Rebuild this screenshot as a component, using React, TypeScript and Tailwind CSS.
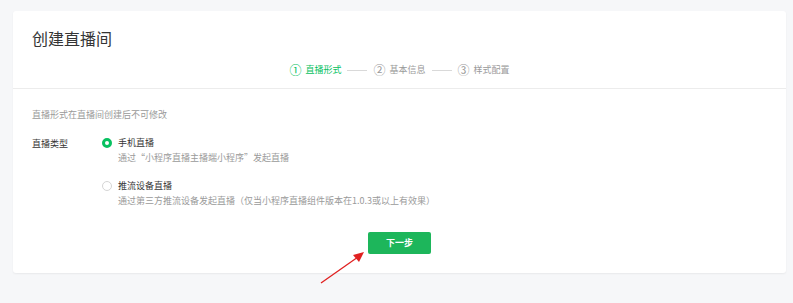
import React, { useState } from 'react';

const steps = ['直播形式', '基本信息', '样式配置'];
const circled = ['①', '②', '③'];

const types = [
  { key: 'phone', label: '手机直播', desc: '通过“小程序直播主播端小程序”发起直播' },
  { key: 'push', label: '推流设备直播', desc: '通过第三方推流设备发起直播（仅当小程序直播组件版本在1.0.3或以上有效果）' },
];

function App() {
  const [type, setType] = useState('phone');

  return (
    <div
      className="relative min-h-screen bg-[#f6f7f9] pt-[11px] pl-[13px] pr-[7px]"
      style={{ fontFamily: '"Noto Sans CJK SC", "Liberation Sans", sans-serif' }}
    >
      <div className="bg-white rounded-[3px] shadow-[0_1px_2px_rgba(0,0,0,0.06)] h-[262px]">
        <div className="h-[78px] border-b border-[#ececec] px-[19px] pt-[14px] relative">
          <h1 className="text-[16px] leading-[26px] text-[#353535] font-normal">创建直播间</h1>
          <div className="flex items-center justify-center gap-[6px] text-[9px] mt-[10px]">
            {steps.map((s, i) => (
              <React.Fragment key={s}>
                {i > 0 && <span className="w-[20px] h-px bg-[#d9d9d9]" />}
                <span className={i === 0 ? 'text-[#07c160] flex items-center' : 'text-[#9a9a9a] flex items-center'}>
                  <span className="text-[12px] mr-[4px]">{circled[i]}</span>
                  {s}
                </span>
              </React.Fragment>
            ))}
          </div>
        </div>

        <div className="px-[19px] pt-[19px]">
          <p className="text-[9px] leading-[14px] text-[#9a9a9a]">直播形式在直播间创建后不可修改</p>
          <div className="flex mt-[13px]">
            <div className="w-[70px] text-[9px] leading-[15px] text-[#353535] pt-[1px]">直播类型</div>
            <div className="flex flex-col gap-[13px]">
              {types.map((t) => (
                <label key={t.key} className="flex gap-[6px] cursor-pointer" onClick={() => setType(t.key)}>
                  <span
                    className={
                      type === t.key
                        ? 'mt-[3px] w-[10px] h-[10px] rounded-full border-[3px] border-[#07c160] bg-white'
                        : 'mt-[3px] w-[10px] h-[10px] rounded-full border border-[#d5d5d5] bg-white'
                    }
                  />
                  <span className="flex flex-col">
                    <span className="text-[9px] leading-[15px] text-[#353535]">{t.label}</span>
                    <span className="text-[9px] leading-[15px] text-[#9a9a9a]">{t.desc}</span>
                  </span>
                </label>
              ))}
            </div>
          </div>
          <div className="flex justify-center mt-[24px]">
            <button className="w-[63px] h-[22px] rounded-[2px] bg-[#1db65b] text-white text-[9px] font-bold">
              下一步
            </button>
          </div>
        </div>
      </div>

      <svg className="absolute left-[318px] top-[248px]" width="50" height="40" viewBox="0 0 50 40">
        <line x1="3" y1="35" x2="40" y2="9" stroke="#e02020" strokeWidth="1.3" />
        <polygon points="46,4 35,7 41,14" fill="#e02020" />
      </svg>
    </div>
  );
}

export default App;
